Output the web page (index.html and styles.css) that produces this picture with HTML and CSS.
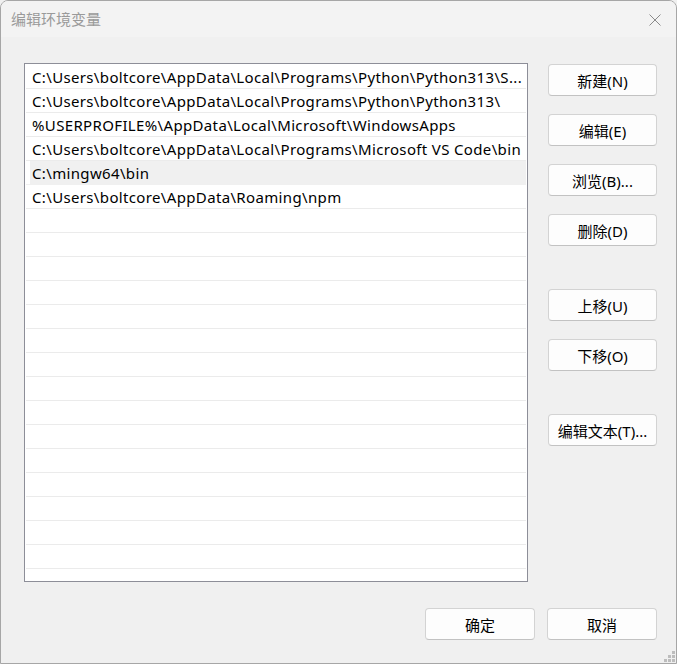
FILE: index.html
```html
<!DOCTYPE html>
<html>
<head>
<meta charset="utf-8">
<link rel="stylesheet" href="styles.css">
</head>
<body>

<div class="window">
    <div class="titlebar">
        <span class="title">编辑环境变量</span>
        <span class="close">
            <svg width="12" height="12" viewBox="0 0 12 12"><path d="M0.5 0.5 L11.5 11.5 M11.5 0.5 L0.5 11.5" stroke="#8a8a8a" stroke-width="1" fill="none"/></svg>
        </span>
    </div>

    <div class="content">
        <div class="path-list">
            <div class="row">C:\Users\boltcore\AppData\Local\Programs\Python\Python313\S...</div>
            <div class="row">C:\Users\boltcore\AppData\Local\Programs\Python\Python313\</div>
            <div class="row">%USERPROFILE%\AppData\Local\Microsoft\WindowsApps</div>
            <div class="row">C:\Users\boltcore\AppData\Local\Programs\Microsoft VS Code\bin</div>
            <div class="row selected">C:\mingw64\bin</div>
            <div class="row">C:\Users\boltcore\AppData\Roaming\npm</div>
            <div class="row"></div>
            <div class="row"></div>
            <div class="row"></div>
            <div class="row"></div>
            <div class="row"></div>
            <div class="row"></div>
            <div class="row"></div>
            <div class="row"></div>
            <div class="row"></div>
            <div class="row"></div>
            <div class="row"></div>
            <div class="row"></div>
            <div class="row"></div>
            <div class="row"></div>
            <div class="row"></div>
            <div class="row"></div>
        </div>

        <div class="side-buttons">
            <div class="btn">新建(N)</div>
            <div class="btn">编辑(E)</div>
            <div class="btn">浏览(B)...</div>
            <div class="btn">删除(D)</div>
            <div class="btn group">上移(U)</div>
            <div class="btn">下移(O)</div>
            <div class="btn group">编辑文本(T)...</div>
        </div>
    </div>

    <div class="footer">
        <div class="btn wide">确定</div>
        <div class="btn wide">取消</div>
    </div>

    <div class="grip">
        <i class="g3"></i>
        <i class="g2"></i><i class="g3"></i>
        <i class="g1"></i><i class="g2"></i><i class="g3"></i>
    </div>
</div>

</body>
</html>
```

FILE: styles.css
```css
body {
    margin: 0;
    background-color: #f0f0f0;
    font-family: "Noto Sans", "Noto Sans CJK SC", sans-serif;
    font-size: 15px;
}

.window {
    position: relative;
    box-sizing: border-box;
    width: 677px;
    height: 664px;
    border: 1px solid #a6a6a6;
    border-radius: 8px 8px 0 0;
    background-color: #f0f0f0;
    overflow: hidden;
}

.titlebar {
    height: 36px;
    background-color: #f3f3f3;
    display: flex;
    align-items: center;
    justify-content: space-between;
    padding: 0 15px 0 10px;
}

.title {
    color: #9a9a9a;
    font-family: "Noto Sans CJK SC", sans-serif;
    font-size: 15px;
    margin-top: -1px;
}

.close {
    display: flex;
    margin-top: 1px;
}

.content {
    display: flex;
    padding: 26px 0 0 23px;
}

.path-list {
    box-sizing: border-box;
    width: 504px;
    height: 519px;
    border: 1px solid #8d8e98;
    background-color: white;
    overflow: hidden;
    padding-top: 1px;
}

.row {
    height: 21px;
    line-height: 21px;
    padding-top: 2px;
    margin: 0 1px;
    border-bottom: 1px solid #ebebeb;
    padding-left: 6px;
    color: black;
    letter-spacing: 0.35px;
    white-space: nowrap;
    overflow: hidden;
}

.row.selected {
    background: linear-gradient(to right, white 4px, #f0f0f0 4px);
    border-bottom-color: #f0f0f0;
}

.side-buttons {
    display: flex;
    flex-direction: column;
    gap: 18px;
    margin-left: 20px;
    padding-top: 1px;
}

.btn {
    box-sizing: border-box;
    width: 109px;
    height: 32px;
    display: flex;
    align-items: center;
    justify-content: center;
    background-color: #fdfdfd;
    border: 1px solid #d3d3d3;
    border-bottom-color: #c2c2c2;
    border-radius: 4px;
    color: black;
    font-size: 15px;
}

.btn.group {
    margin-top: 25px;
}

.footer {
    display: flex;
    justify-content: flex-end;
    gap: 12px;
    padding: 26px 19px 0 0;
}

.btn.wide {
    width: 110px;
}

/* resize grip */
.grip {
    position: absolute;
    right: 1px;
    bottom: 1px;
    display: grid;
    grid-template-columns: repeat(3, 3px);
    grid-template-rows: repeat(3, 3px);
    gap: 1px;
}

.grip i {
    display: block;
    width: 3px;
    height: 3px;
    background-color: #bdbdbd;
}

.grip .g1 { grid-column: 1; }
.grip .g2 { grid-column: 2; }
.grip .g3 { grid-column: 3; }
```
